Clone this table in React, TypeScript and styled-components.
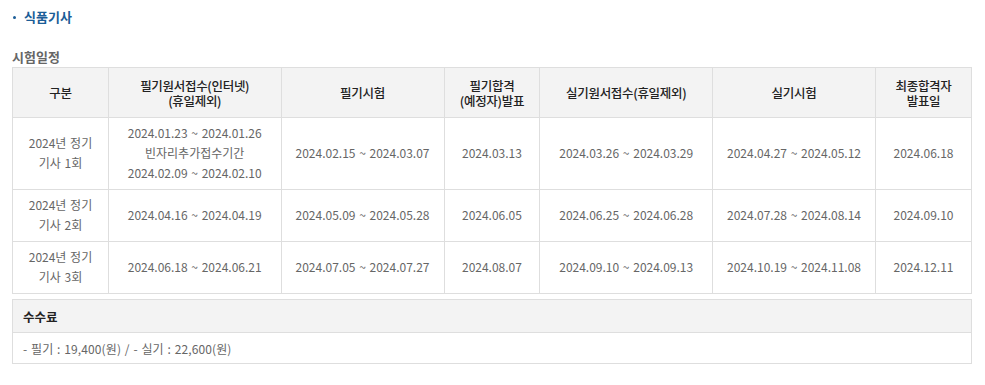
import React from 'react'
import styled, { createGlobalStyle } from 'styled-components'

const GlobalStyle = createGlobalStyle`
  body {
    margin: 0;
    background: #fff;
    font-family: "Noto Sans CJK KR", "Noto Sans", sans-serif;
  }
`

const Page = styled.div`
  padding: 8px 13px 0 12px;
  width: 960px;
`

const Title = styled.h3`
  margin: 0 0 0 1px;
  font-size: 13px;
  font-weight: 700;
  color: #1b5d97;
  line-height: 18px;
  display: flex;
  align-items: center;
  gap: 8px;

  &::before {
    content: '';
    width: 3px;
    height: 3px;
    border-radius: 50%;
    background: #1b5d97;
  }
`

const SectionLabel = styled.h4`
  margin: 22px 0 0;
  font-size: 13px;
  font-weight: 700;
  color: #666;
  line-height: 18px;
`

const Table = styled.table`
  width: 960px;
  border-collapse: collapse;
  table-layout: fixed;
  margin-top: 1px;
  font-size: 12px;
`

const Th = styled.th`
  background: #f3f3f3;
  border: 1px solid #dedede;
  color: #222;
  font-weight: 500;
  font-size: 12.5px;
  line-height: 15px;
  height: 49px;
  padding: 0 4px;
  letter-spacing: -0.3px;
`

const Td = styled.td`
  border: 1px solid #dedede;
  color: #666;
  text-align: center;
  line-height: 20px;
  padding: 5px 4px 6px;
  letter-spacing: 0;
  word-spacing: 1px;
`

const FeeBox = styled.div`
  margin-top: 5px;
  border: 1px solid #dedede;
`

const FeeHead = styled.div`
  background: #f3f3f3;
  border-bottom: 1px solid #dedede;
  height: 32px;
  display: flex;
  align-items: center;
  padding-left: 10px;
  font-size: 12.5px;
  font-weight: 700;
  color: #222;
`

const FeeBody = styled.div`
  height: 30px;
  display: flex;
  align-items: center;
  padding-left: 10px;
  font-size: 12px;
  color: #666;
  letter-spacing: 0.1px;
  word-spacing: 1px;
`

const cols = ['10%', '18%', '17%', '10%', '18%', '17%', '10%']

const headers: React.ReactNode[] = [
  '구분',
  <>필기원서접수(인터넷)<br />(휴일제외)</>,
  '필기시험',
  <>필기합격<br />(예정자)발표</>,
  '실기원서접수(휴일제외)',
  '실기시험',
  <>최종합격자<br />발표일</>,
]

const rows: React.ReactNode[][] = [
  [
    <>2024년 정기<br />기사 1회</>,
    <>2024.01.23 ~ 2024.01.26<br />빈자리추가접수기간<br />2024.02.09 ~ 2024.02.10</>,
    '2024.02.15 ~ 2024.03.07',
    '2024.03.13',
    '2024.03.26 ~ 2024.03.29',
    '2024.04.27 ~ 2024.05.12',
    '2024.06.18',
  ],
  [
    <>2024년 정기<br />기사 2회</>,
    '2024.04.16 ~ 2024.04.19',
    '2024.05.09 ~ 2024.05.28',
    '2024.06.05',
    '2024.06.25 ~ 2024.06.28',
    '2024.07.28 ~ 2024.08.14',
    '2024.09.10',
  ],
  [
    <>2024년 정기<br />기사 3회</>,
    '2024.06.18 ~ 2024.06.21',
    '2024.07.05 ~ 2024.07.27',
    '2024.08.07',
    '2024.09.10 ~ 2024.09.13',
    '2024.10.19 ~ 2024.11.08',
    '2024.12.11',
  ],
]

const App = () => {
  return (
    <Page>
      <GlobalStyle />
      <Title>식품기사</Title>
      <SectionLabel>시험일정</SectionLabel>
      <Table>
        <colgroup>
          {cols.map((w, i) => <col key={i} style={{ width: w }} />)}
        </colgroup>
        <thead>
          <tr>
            {headers.map((h, i) => <Th key={i}>{h}</Th>)}
          </tr>
        </thead>
        <tbody>
          {rows.map((r, i) => (
            <tr key={i}>
              {r.map((c, j) => <Td key={j}>{c}</Td>)}
            </tr>
          ))}
        </tbody>
      </Table>
      <FeeBox>
        <FeeHead>수수료</FeeHead>
        <FeeBody>- 필기 : 19,400(원) / - 실기 : 22,600(원)</FeeBody>
      </FeeBox>
    </Page>
  )
}

export default App
